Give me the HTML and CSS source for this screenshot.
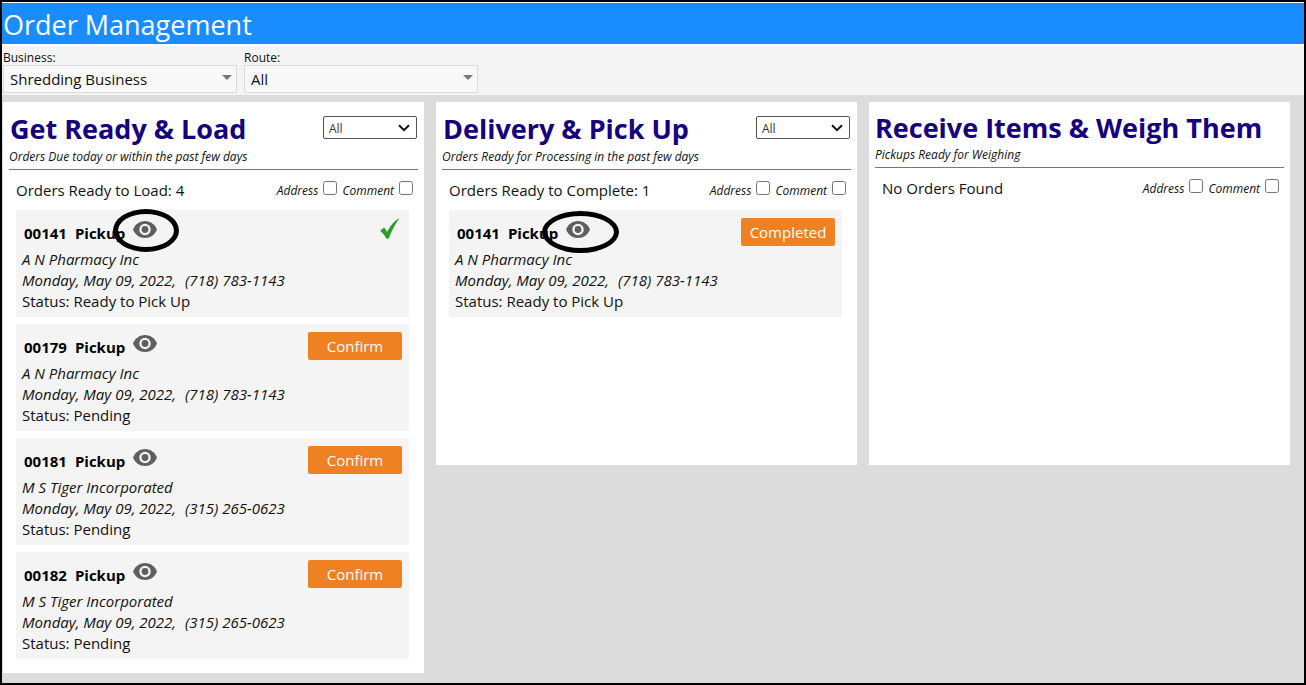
FILE: index.html
```html
<!DOCTYPE html>
<html lang="en">
<head>
<meta charset="utf-8">
<meta name="viewport" content="width=device-width, initial-scale=1.0">
<title>Order Management</title>
<link rel="stylesheet" href="styles.css">
</head>
<body>

<!-- Icons used by the cards -->
<svg class="sprite" aria-hidden="true">
  <symbol id="eye" viewBox="0 0 24 17">
    <path d="M12 0C6.500 0 2 3.500 0 8.500C2 13.500 6.500 17 12 17C17.500 17 22 13.500 24 8.500C22 3.500 17.500 0 12 0Z" fill="#5f5f5f"/>
    <circle cx="12" cy="8.500" r="5.700" fill="#f4f4f4"/>
    <circle cx="12" cy="8.500" r="3.400" fill="#5f5f5f"/>
  </symbol>
  <symbol id="check" viewBox="0 0 20 21">
    <path d="M0 13L4 9.500C5.500 11 6.300 12.300 7 14C10 8 14 3 19.600 0C15 6 11.500 13 9 20C8.300 21 6.500 21 5.800 20C4.500 17 2.500 14.500 0 13Z" fill="#2a9d2a"/>
  </symbol>
  <symbol id="chevron" viewBox="0 0 12 8">
    <path d="M1 1.200L6 6.200L11 1.200" fill="none" stroke="#111" stroke-width="2"/>
  </symbol>
</svg>

<header>
  <h1>Order Management</h1>
</header>

<div class="filters">
  <div class="filter">
    <label for="business">Business:</label>
    <div class="combo">
      <select id="business"><option>Shredding Business</option></select>
    </div>
  </div>
  <div class="filter">
    <label for="route">Route:</label>
    <div class="combo">
      <select id="route"><option>All</option></select>
    </div>
  </div>
</div>

<main class="board">

  <!-- Get Ready & Load -->
  <section class="column">
    <div class="column-head">
      <h2>Get Ready &amp; Load</h2>
      <div class="small-select">
        <select aria-label="Load filter"><option>All</option></select>
        <svg><use href="#chevron"/></svg>
      </div>
    </div>
    <p class="subtitle">Orders Due today or within the past few days</p>
    <div class="summary">
      <span>Orders Ready to Load: 4</span>
      <div class="checks">
        <label for="address1">Address</label><input type="checkbox" id="address1">
        <label for="comment1">Comment</label><input type="checkbox" id="comment1">
      </div>
    </div>
    <div class="orders">
      <article class="card">
        <div class="card-head">
          <h3><span>00141</span><span>Pickup</span></h3>
          <button class="view" aria-label="View order"><svg><use href="#eye"/></svg></button>
          <svg class="done"><use href="#check"/></svg>
        </div>
        <p class="info">A N Pharmacy Inc</p>
        <p class="info"><span>Monday, May 09, 2022,</span><span>(718) 783-1143</span></p>
        <p>Status: Ready to Pick Up</p>
        <div class="mark"></div>
      </article>
      <article class="card">
        <div class="card-head">
          <h3><span>00179</span><span>Pickup</span></h3>
          <button class="view" aria-label="View order"><svg><use href="#eye"/></svg></button>
          <button class="action">Confirm</button>
        </div>
        <p class="info">A N Pharmacy Inc</p>
        <p class="info"><span>Monday, May 09, 2022,</span><span>(718) 783-1143</span></p>
        <p>Status: Pending</p>
      </article>
      <article class="card">
        <div class="card-head">
          <h3><span>00181</span><span>Pickup</span></h3>
          <button class="view" aria-label="View order"><svg><use href="#eye"/></svg></button>
          <button class="action">Confirm</button>
        </div>
        <p class="info">M S Tiger Incorporated</p>
        <p class="info"><span>Monday, May 09, 2022,</span><span>(315) 265-0623</span></p>
        <p>Status: Pending</p>
      </article>
      <article class="card">
        <div class="card-head">
          <h3><span>00182</span><span>Pickup</span></h3>
          <button class="view" aria-label="View order"><svg><use href="#eye"/></svg></button>
          <button class="action">Confirm</button>
        </div>
        <p class="info">M S Tiger Incorporated</p>
        <p class="info"><span>Monday, May 09, 2022,</span><span>(315) 265-0623</span></p>
        <p>Status: Pending</p>
      </article>
    </div>
  </section>

  <!-- Delivery & Pick Up -->
  <section class="column">
    <div class="column-head">
      <h2>Delivery &amp; Pick Up</h2>
      <div class="small-select">
        <select aria-label="Delivery filter"><option>All</option></select>
        <svg><use href="#chevron"/></svg>
      </div>
    </div>
    <p class="subtitle">Orders Ready for Processing in the past few days</p>
    <div class="summary">
      <span>Orders Ready to Complete: 1</span>
      <div class="checks">
        <label for="address2">Address</label><input type="checkbox" id="address2">
        <label for="comment2">Comment</label><input type="checkbox" id="comment2">
      </div>
    </div>
    <div class="orders">
      <article class="card">
        <div class="card-head">
          <h3><span>00141</span><span>Pickup</span></h3>
          <button class="view" aria-label="View order"><svg><use href="#eye"/></svg></button>
          <button class="action">Completed</button>
        </div>
        <p class="info">A N Pharmacy Inc</p>
        <p class="info"><span>Monday, May 09, 2022,</span><span>(718) 783-1143</span></p>
        <p>Status: Ready to Pick Up</p>
        <div class="mark wide"></div>
      </article>
    </div>
  </section>

  <!-- Receive Items -->
  <section class="column plain">
    <div class="column-head">
      <h2>Receive Items &amp; Weigh Them</h2>
    </div>
    <p class="subtitle">Pickups Ready for Weighing</p>
    <div class="summary">
      <span>No Orders Found</span>
      <div class="checks">
        <label for="address3">Address</label><input type="checkbox" id="address3">
        <label for="comment3">Comment</label><input type="checkbox" id="comment3">
      </div>
    </div>
  </section>

</main>
</body>
</html>
```
FILE: styles.css
```css
* {
  box-sizing: border-box;
}

body {
  margin: 0;
  min-height: 100vh;
  display: flex;
  flex-direction: column;
  border: 2px solid #000;
  background-color: #dcdcdc;
  font-family: "Open Sans", "Noto Sans", sans-serif;
  font-size: 15px;
  color: #111;
}

h1, h2, h3, p {
  margin: 0;
}

select, button, input {
  font-family: inherit;
}

.sprite {
  position: absolute;
  width: 0;
  height: 0;
}

header {
  border-top: 1px solid #fff;
  border-bottom: 2px solid #fff;
  background-color: #198cff;
}

h1 {
  padding: 3px 1px 0;
  font-size: 27px;
  line-height: 38px;
  font-weight: 400;
  color: #fff;
}

/* Filter bar */
.filters {
  display: flex;
  gap: 7px;
  padding: 3px 1px 2px;
  background-color: #f4f4f4;
}

.filter {
  width: 234px;
}

.filter label {
  display: block;
  padding-top: 1px;
  font-size: 12px;
  line-height: 15px;
}

.combo {
  position: relative;
}

.combo select {
  display: block;
  width: 100%;
  height: 28px;
  padding: 0 20px 0 6px;
  appearance: none;
  border: 1px solid #dcdcdc;
  border-radius: 0;
  background-color: #f8f8f8;
  color: #111;
  font-size: 15px;
}

.combo::after {
  content: "";
  position: absolute;
  top: 10px;
  right: 5px;
  border: 5px solid transparent;
  border-top-color: #777;
  border-bottom: 0;
}

/* Columns */
.board {
  display: grid;
  grid-template-columns: repeat(3, 1fr);
  gap: 12px;
  align-items: start;
  padding: 7px 14px 10px 1px;
}

.column {
  min-height: 363px;
  padding: 8px 6px 14px;
  background-color: #fff;
}

.column-head {
  display: flex;
  justify-content: space-between;
  height: 38px;
}

.plain .column-head {
  height: 36px;
}

h2 {
  padding-left: 1px;
  font-size: 27px;
  line-height: 38px;
  font-weight: 700;
  color: #16007d;
  white-space: nowrap;
}

.plain h2 {
  padding-left: 0;
  line-height: 36px;
}

.small-select {
  position: relative;
  width: 94px;
  margin: 6px 1px 0 0;
}

.small-select select {
  display: block;
  width: 100%;
  height: 23px;
  padding: 1px 20px 0 5px;
  appearance: none;
  border: 1px solid #555;
  border-radius: 2px;
  background-color: #fff;
  color: #333;
  font-size: 12px;
}

.small-select svg {
  position: absolute;
  top: 8px;
  right: 7px;
  width: 12px;
  height: 8px;
  pointer-events: none;
}

.subtitle {
  height: 22px;
  border-bottom: 1px solid #777;
  font-size: 12px;
  line-height: 17px;
  font-style: italic;
}

.summary {
  display: flex;
  justify-content: space-between;
  align-items: center;
  padding: 0 5px 0 7px;
  line-height: 40px;
}

.checks {
  display: flex;
  align-items: center;
  gap: 5px;
}

.checks label {
  height: 40px;
  padding-top: 2px;
  font-size: 12px;
  line-height: 38px;
  font-style: italic;
}

.checks input {
  width: 14px;
  height: 14px;
  margin: 0 0 4px;
}

/* Order cards */
.orders {
  display: grid;
  gap: 7px;
  padding: 0 9px 0 7px;
}

.card {
  position: relative;
  height: 107px;
  padding: 8px 7px 0 6px;
  background-color: #f4f4f4;
}

.card p {
  line-height: 21px;
}

.card-head {
  display: flex;
  height: 31px;
}

h3 {
  display: flex;
  gap: 8px;
  padding-left: 2px;
  font-size: 15px;
  line-height: 30px;
  color: #000;
}

.info {
  display: flex;
  gap: 9px;
  font-style: italic;
}

.view {
  width: 24px;
  height: 17px;
  margin: 3px 0 0 8px;
  padding: 0;
  border: 0;
  background: none;
  cursor: pointer;
}

.view svg {
  display: block;
  width: 24px;
  height: 17px;
}

.done {
  width: 20px;
  height: 21px;
  margin: 0 2px 0 auto;
}

.action {
  width: 94px;
  height: 28px;
  margin-left: auto;
  padding: 0;
  border: 0;
  border-radius: 2px;
  background-color: #ef8122;
  color: #fff;
  font-size: 15px;
  cursor: pointer;
}

/* Rings drawn over the view icons */
.mark {
  position: absolute;
  top: -1px;
  left: 97px;
  width: 66px;
  height: 43px;
  border: 5px solid #000;
  border-radius: 50%;
  pointer-events: none;
}

.mark.wide {
  top: 1px;
  left: 93px;
  width: 77px;
  height: 42px;
}
```
